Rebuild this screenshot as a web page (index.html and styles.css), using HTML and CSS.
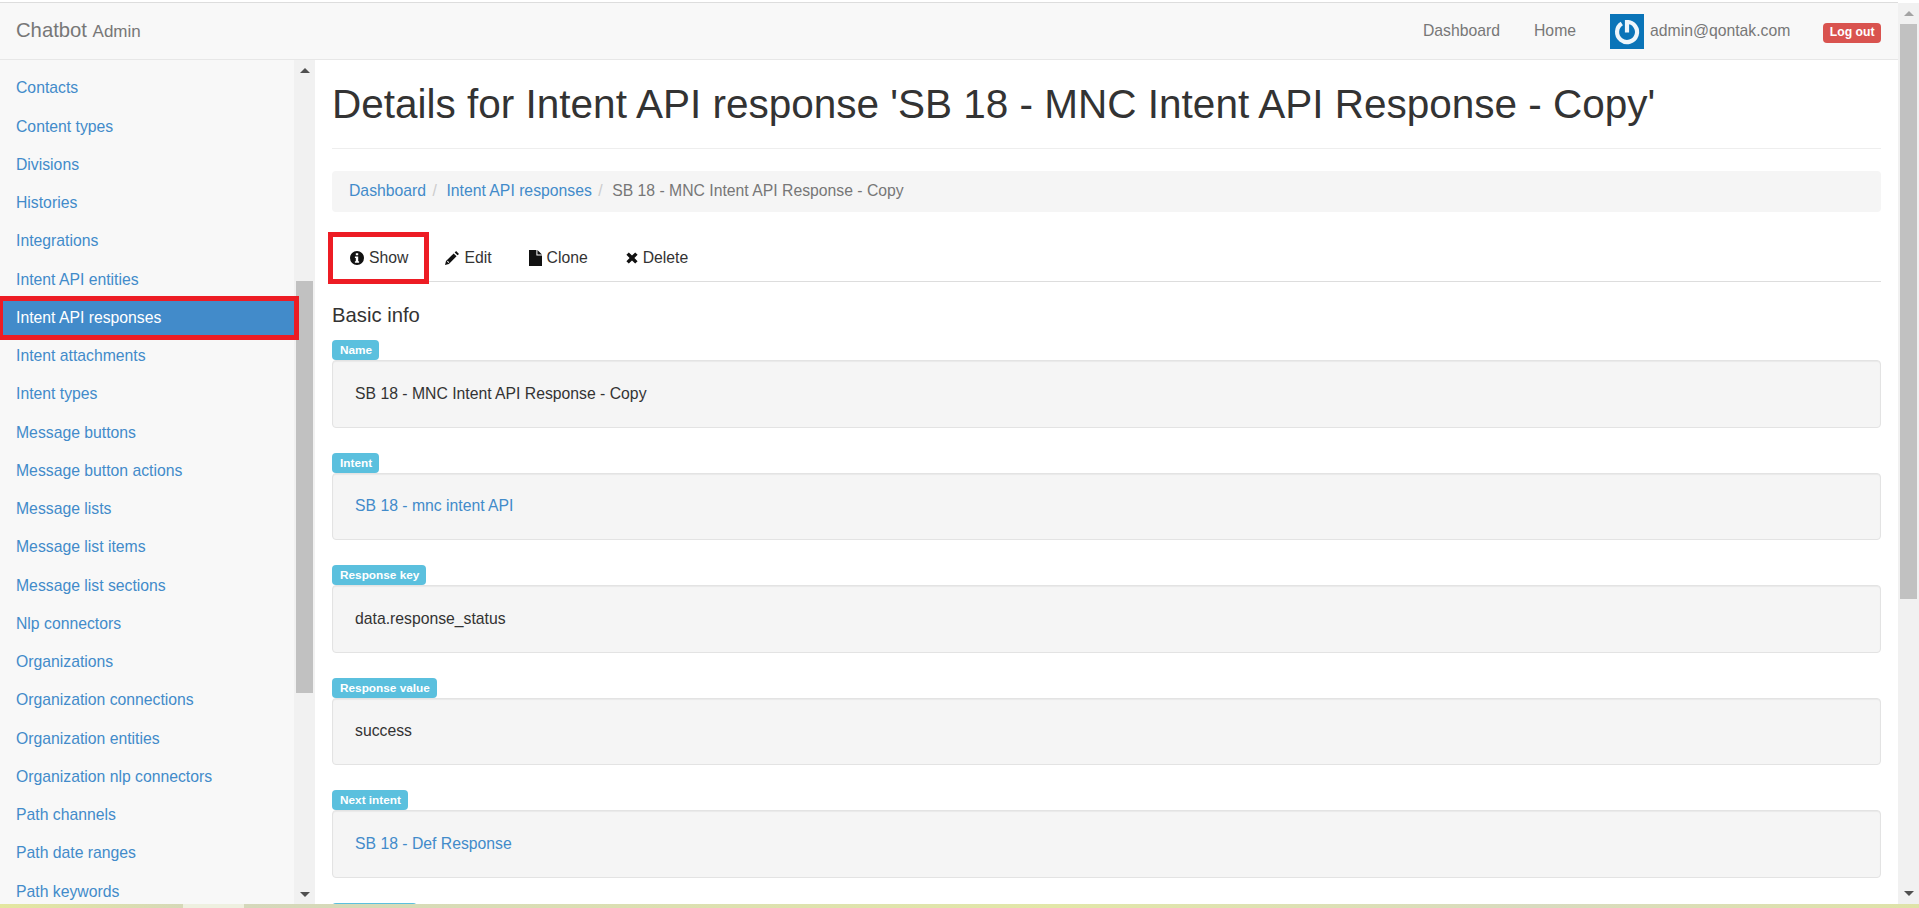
FILE: index.html
```html
<!DOCTYPE html>
<html lang="en">
<head>
  <meta charset="UTF-8" />
  <title>Chatbot Admin</title>
  <link rel="stylesheet" href="styles.css">
</head>
<body>

<div class="app">
  <header class="navbar">
    <a class="brand" href="#">Chatbot <small>Admin</small></a>
    <nav class="top-nav">
      <a href="#">Dashboard</a>
      <a href="#">Home</a>
      <a class="user" href="#">
        <svg class="avatar" viewBox="0 0 34 35">
          <rect width="34" height="35" fill="#0a74b8"/>
          <g class="avatar-mark">
            <path d="M17 8a10 10 0 1 1-5.2 1.5" fill="none" stroke="#eef6fb" stroke-width="4.2"/>
            <path d="M14.9 6h4.2v12.5h-4.2z" fill="#eef6fb"/>
          </g>
        </svg>
        admin@qontak.com
      </a>
      <a class="logout" href="#">Log out</a>
    </nav>
  </header>

  <div class="columns">
    <aside class="sidebar">
      <ul class="side-menu">
        <li><a href="#">Contacts</a></li>
        <li><a href="#">Content types</a></li>
        <li><a href="#">Divisions</a></li>
        <li><a href="#">Histories</a></li>
        <li><a href="#">Integrations</a></li>
        <li><a href="#">Intent API entities</a></li>
        <li><a class="active" href="#">Intent API responses</a></li>
        <li><a href="#">Intent attachments</a></li>
        <li><a href="#">Intent types</a></li>
        <li><a href="#">Message buttons</a></li>
        <li><a href="#">Message button actions</a></li>
        <li><a href="#">Message lists</a></li>
        <li><a href="#">Message list items</a></li>
        <li><a href="#">Message list sections</a></li>
        <li><a href="#">Nlp connectors</a></li>
        <li><a href="#">Organizations</a></li>
        <li><a href="#">Organization connections</a></li>
        <li><a href="#">Organization entities</a></li>
        <li><a href="#">Organization nlp connectors</a></li>
        <li><a href="#">Path channels</a></li>
        <li><a href="#">Path date ranges</a></li>
        <li><a href="#">Path keywords</a></li>
      </ul>
      <div class="scrollbar side-scroll">
        <span class="arrow up"></span>
        <span class="track"><span class="thumb"></span></span>
        <span class="arrow down"></span>
      </div>
    </aside>

    <main class="content">
      <h1>Details for Intent API response 'SB 18 - MNC Intent API Response - Copy'</h1>

      <ol class="breadcrumb">
        <li><a href="#">Dashboard</a></li>
        <li><a href="#">Intent API responses</a></li>
        <li class="current">SB 18 - MNC Intent API Response - Copy</li>
      </ol>

      <ul class="tabs">
        <li class="selected">
          <a href="#">
            <svg class="icon" viewBox="0 0 14 14"><path fill-rule="evenodd" d="M7 0a7 7 0 1 0 0 14A7 7 0 0 0 7 0zM5.8 2.2h2.4v2.1H5.8zM4.9 5.5h3.3v4.8h.9v1.4H4.9v-1.4h.9V6.9h-.9z"/></svg>
            Show
          </a>
        </li>
        <li>
          <a href="#">
            <svg class="icon" viewBox="0.6 0.8 12.6 12.6"><path d="M10.6.8l2.6 2.6-1.3 1.3-2.6-2.6zM8.4 3l2.6 2.6-6.9 6.9L.6 13.4l.9-3.5zM2.4 10.2l1.4 1.4.6-.6L3 9.6z"/></svg>
            Edit
          </a>
        </li>
        <li>
          <a href="#">
            <svg class="icon icon-file" viewBox="0 0 13 16"><path d="M0 0h7.4v5.6H13V16H0zM8.4 0L13 4.6H8.4z"/></svg>
            Clone
          </a>
        </li>
        <li>
          <a href="#">
            <svg class="icon icon-times" viewBox="0 0 12 12"><path d="M2.8.4L6 3.6 9.2.4l2.4 2.4L8.4 6l3.2 3.2-2.4 2.4L6 8.4l-3.2 3.2L.4 9.2 3.6 6 .4 2.8z"/></svg>
            Delete
          </a>
        </li>
      </ul>

      <h4 class="section-title">Basic info</h4>

      <div class="field">
        <span class="label">Name</span>
        <div class="well">SB 18 - MNC Intent API Response - Copy</div>
      </div>
      <div class="field">
        <span class="label">Intent</span>
        <div class="well"><a href="#">SB 18 - mnc intent API</a></div>
      </div>
      <div class="field">
        <span class="label">Response key</span>
        <div class="well">data.response_status</div>
      </div>
      <div class="field">
        <span class="label">Response value</span>
        <div class="well">success</div>
      </div>
      <div class="field">
        <span class="label">Next intent</span>
        <div class="well"><a href="#">SB 18 - Def Response</a></div>
      </div>
      <div class="field">
        <span class="label label-cut"></span>
      </div>
    </main>

    <div class="scrollbar page-scroll">
      <span class="arrow up"></span>
      <span class="track"><span class="thumb"></span></span>
      <span class="arrow down"></span>
    </div>
  </div>
</div>

<div class="desktop-strip"></div>

</body>
</html>
```

FILE: styles.css
```css
* {
  box-sizing: border-box;
}

html, body {
  height: 100%;
  margin: 0;
  overflow: hidden;
}

body {
  display: flex;
  flex-direction: column;
  background: #fff;
  color: #333;
  font-family: "Liberation Sans", Arial, sans-serif;
  font-size: 15.75px;
  line-height: 22.5px;
}

a {
  color: #428bca;
  text-decoration: none;
}

.app {
  flex: 1;
  min-height: 0;
  display: flex;
  flex-direction: column;
  padding-top: 2px;
}

.navbar {
  height: 58px;
  flex: none;
  display: flex;
  justify-content: space-between;
  align-items: center;
  padding: 0 17px 0 16px;
  margin-right: 21px;
  background: #f8f8f8;
  border-top: 1px solid #ddd;
  border-bottom: 1px solid #e7e7e7;
}

.brand {
  color: #777;
  font-size: 20.25px;
}

.brand small {
  font-size: 17px;
}

.top-nav {
  display: flex;
  align-items: center;
}

.top-nav a {
  color: #777;
}

.top-nav a + a {
  margin-left: 34px;
}

.top-nav .user {
  display: flex;
  align-items: center;
  gap: 6px;
}

.avatar {
  width: 34px;
  height: 35px;
}

.avatar-mark {
  filter: blur(.5px);
}

.top-nav .logout {
  margin-top: 4px;
  margin-left: 33px;
  padding: 0 6.5px;
  background: #d9534f;
  border-radius: 4px;
  color: #fff;
  font-size: 12.2px;
  font-weight: bold;
  line-height: 19.5px;
}

.columns {
  flex: 1;
  min-height: 0;
  display: flex;
}

.sidebar {
  width: 315px;
  flex: none;
  display: flex;
  overflow: hidden;
  background: #f8f8f8;
}

.side-menu {
  flex: 1;
  min-width: 0;
  list-style: none;
  margin: 0;
  padding: 9.5px 0 0;
}

.side-menu a {
  display: block;
  height: 38.25px;
  padding: 7.875px 16px;
}

.side-menu a.active {
  position: relative;
  z-index: 1;
  background: #428bca;
  color: #fff;
}

/* annotation box drawn over the selected row */
.side-menu a.active::after {
  content: "";
  position: absolute;
  top: -3px;
  right: -5px;
  bottom: -3px;
  left: 0;
  border: 5px solid #ed1c24;
  border-left-width: 3px;
}

.scrollbar {
  flex: none;
  display: flex;
  flex-direction: column;
  align-items: center;
  background: #f1f1f1;
}

.side-scroll {
  width: 21px;
}

.page-scroll {
  width: 21px;
  margin-top: -57px;
}

.track {
  flex: 1;
  width: 100%;
  display: block;
  padding: 0 2px;
}

.thumb {
  display: block;
  background: #c1c1c1;
}

.side-scroll .thumb {
  height: 412px;
  margin-top: 201px;
}

.page-scroll .thumb {
  height: 575px;
}

.arrow {
  flex: none;
  height: 20px;
  display: flex;
  align-items: center;
  justify-content: center;
}

.page-scroll .arrow {
  height: 21px;
}

.arrow::before {
  content: "";
  border-left: 5px solid transparent;
  border-right: 5px solid transparent;
}

.arrow.up::before {
  border-bottom: 5px solid #505050;
}

.arrow.down::before {
  border-top: 5px solid #505050;
}

.page-scroll .arrow.up::before {
  border-bottom-color: #a3a3a3;
}

.content {
  flex: 1;
  min-width: 0;
  overflow: hidden;
  padding: 0 17px 0 17px;
}

h1 {
  margin: 21.5px 0 22.5px;
  padding-bottom: 21.5px;
  border-bottom: 1px solid #eee;
  color: #333;
  font-size: 40.5px;
  font-weight: 500;
  line-height: 44.5px;
}

.breadcrumb {
  display: flex;
  height: 41px;
  align-items: center;
  list-style: none;
  margin: 0 0 24px;
  padding: 0 17px;
  background: #f5f5f5;
  border-radius: 4px;
}

.breadcrumb li + li::before {
  content: "/";
  padding: 0 9.5px 0 6.5px;
  color: #ccc;
}

.breadcrumb .current {
  color: #777;
}

.tabs {
  display: flex;
  list-style: none;
  margin: 0 0 22px;
  padding: 0;
  height: 46px;
  border-bottom: 1px solid #ddd;
}

.tabs a {
  display: flex;
  align-items: center;
  gap: 5px;
  height: 45px;
  padding: 0 19px 0 18px;
  color: #333;
}

.tabs .selected {
  position: relative;
}

/* annotation box drawn over the active tab */
.tabs .selected::after {
  content: "";
  position: absolute;
  top: -4px;
  right: -2px;
  bottom: -3px;
  left: -4px;
  border: 5px solid #ed1c24;
}

.icon {
  width: 14px;
  height: 14px;
  margin-bottom: 2px;
  fill: #111;
}

.icon-file {
  width: 13px;
  height: 16px;
}

.icon-times {
  width: 12px;
  height: 12px;
  margin-left: 1px;
}

.section-title {
  margin: 0 0 14px;
  color: #333;
  font-size: 20.25px;
  font-weight: 500;
  line-height: 22px;
}

.field {
  margin-bottom: 24.75px;
}

.label {
  display: table;
  height: 20.25px;
  padding: 0 7px 0 8px;
  background: #5bc0de;
  border-radius: 4px;
  color: #fff;
  font-size: 11.8px;
  font-weight: bold;
  line-height: 20.25px;
}

.label-cut {
  width: 85px;
}

.well {
  height: 67.5px;
  padding: 21.5px 22px;
  background: #f5f5f5;
  border: 1px solid #e3e3e3;
  border-radius: 4px;
  box-shadow: inset 0 1px 1px rgba(0, 0, 0, .05);
}

.desktop-strip {
  height: 4px;
  flex: none;
  background: linear-gradient(to right, #e4e7a0 0, #d6d9b8 183px, #eef0e0 183px, #eef0e0 244px, #d5d8bb 244px, #e2e7a8 55%, #d8dbbf 80%, #dfe3a8 100%);
}
```
